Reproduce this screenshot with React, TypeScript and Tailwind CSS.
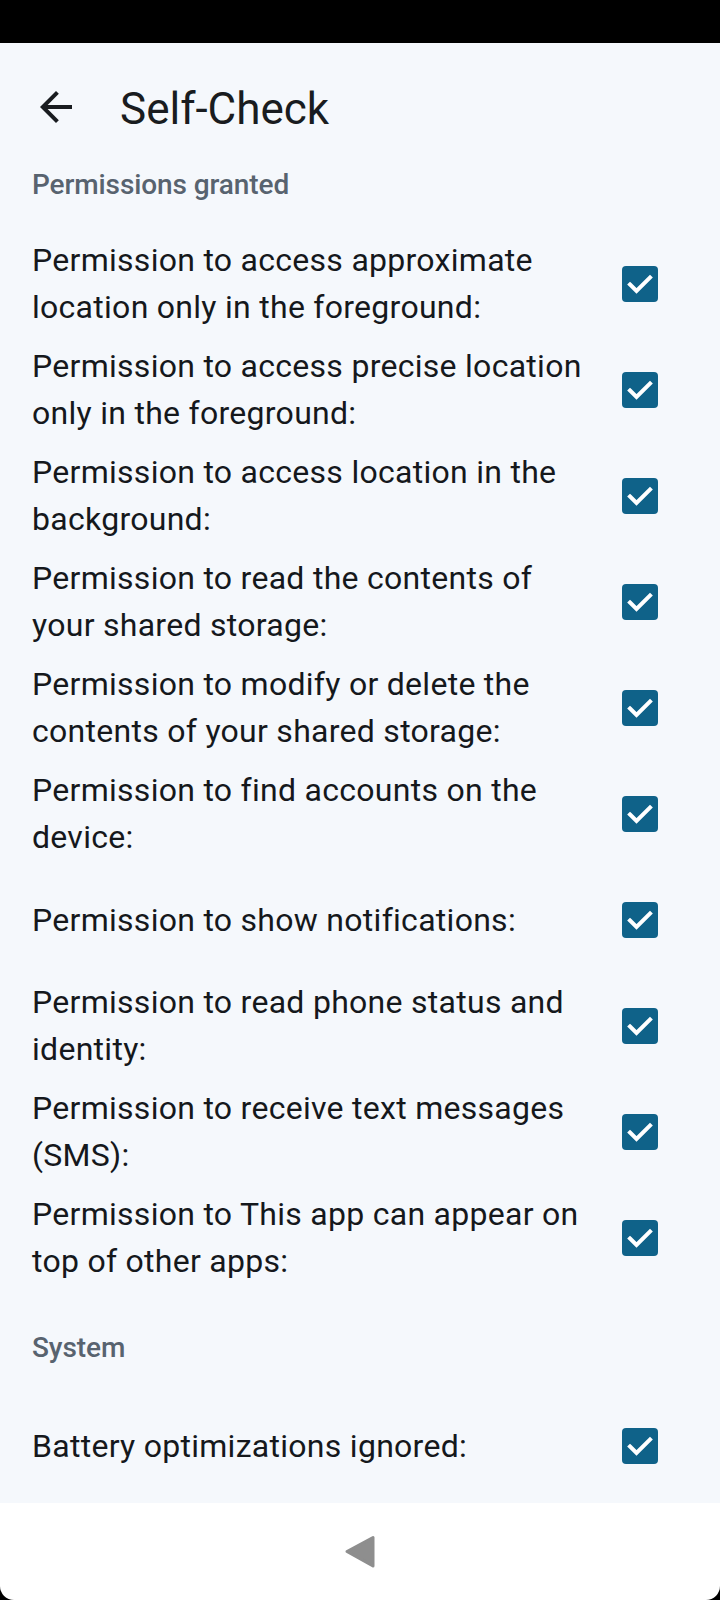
const permissions = [
  "Permission to access approximate location only in the foreground:",
  "Permission to access precise location only in the foreground:",
  "Permission to access location in the background:",
  "Permission to read the contents of your shared storage:",
  "Permission to modify or delete the contents of your shared storage:",
  "Permission to find accounts on the device:",
  "Permission to show notifications:",
  "Permission to read phone status and identity:",
  "Permission to receive text messages (SMS):",
  "Permission to This app can appear on top of other apps:",
];

function CheckBox() {
  return (
    <div className="w-[36px] h-[36px] rounded-[4px] bg-[#0f6289] flex items-center justify-center">
      <svg width="36" height="36" viewBox="0 0 36 36" fill="none">
        <polyline
          points="8,18.5 14.5,25 28,11.5"
          stroke="#ffffff"
          strokeWidth="4"
          strokeLinecap="square"
        />
      </svg>
    </div>
  );
}

function Row({ label }: { label: string }) {
  return (
    <div className="h-[106px] flex items-center pl-[32px] pr-[32px]">
      <p className="flex-1 text-[32px] leading-[47px] tracking-[0.28px] text-[#15181c]">{label}</p>
      <div className="w-[96px] flex justify-center">
        <CheckBox />
      </div>
    </div>
  );
}

function SectionHeader({ title, className }: { title: string; className: string }) {
  return (
    <div className={`px-[32px] ${className}`}>
      <h2 className="text-[28px] leading-[28px] font-medium tracking-[-0.1px] text-[#58636f]">{title}</h2>
    </div>
  );
}

export default function App() {
  return (
    <div className="w-[720px] h-[1600px] bg-black flex flex-col font-[Roboto,sans-serif]">
      {/* Status bar */}
      <div className="h-[43px] bg-black" />

      <div className="flex-1 bg-[#f5f8fc] flex flex-col">
        {/* Toolbar */}
        <div className="h-[128px] flex items-center pl-[32px]">
          <svg width="48" height="48" viewBox="0 0 24 24" fill="#191c20">
            <path d="M20 11H7.83l5.59-5.59L12 4l-8 8 8 8 1.41-1.41L7.83 13H20v-2z" />
          </svg>
          <h1 className="ml-[40px] text-[44px] leading-[52px] pt-[4px] text-[#191c20]">Self-Check</h1>
        </div>

        <SectionHeader title="Permissions granted" className="mb-[32px]" />
        {permissions.map((p) => (
          <Row key={p} label={p} />
        ))}

        <SectionHeader title="System" className="mt-[43px] mb-[31px]" />
        <Row label="Battery optimizations ignored:" />
      </div>

      {/* Navigation bar */}
      <div className="h-[97px] bg-white rounded-b-[14px] flex items-center justify-center">
        <svg width="40" height="40" viewBox="0 0 40 40">
          <path
            d="M7 19.5 L33 5.5 L33 34 Z"
            fill="#8e8e8e"
            stroke="#8e8e8e"
            strokeWidth="3"
            strokeLinejoin="round"
          />
        </svg>
      </div>
    </div>
  );
}
